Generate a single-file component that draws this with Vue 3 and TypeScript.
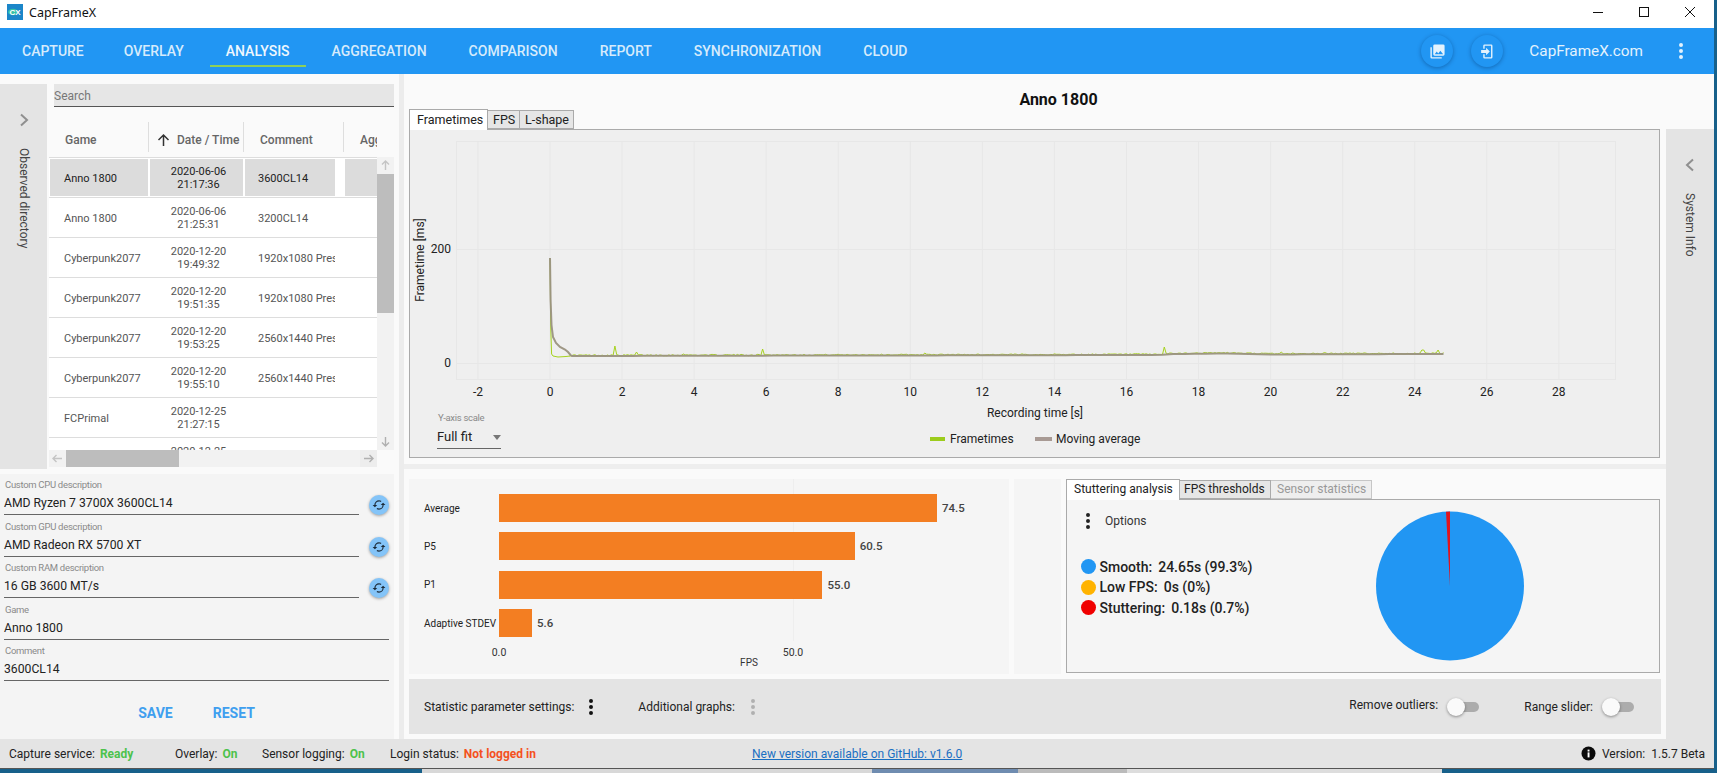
<script setup lang="ts">
const navItems = ['CAPTURE', 'OVERLAY', 'ANALYSIS', 'AGGREGATION', 'COMPARISON', 'REPORT', 'SYNCHRONIZATION', 'CLOUD']
const DOTS = 'M12,16A2,2 0 0,1 14,18A2,2 0 0,1 12,20A2,2 0 0,1 10,18A2,2 0 0,1 12,16M12,10A2,2 0 0,1 14,12A2,2 0 0,1 12,14A2,2 0 0,1 10,12A2,2 0 0,1 12,10M12,4A2,2 0 0,1 14,6A2,2 0 0,1 12,8A2,2 0 0,1 10,6A2,2 0 0,1 12,4Z'
const SYNC = 'M12,18A6,6 0 0,1 6,12C6,11 6.25,10.03 6.7,9.2L5.24,7.74C4.46,8.97 4,10.43 4,12A8,8 0 0,0 12,20V23L16,19L12,15M12,4V1L8,5L12,9V6A6,6 0 0,1 18,12C18,13 17.75,13.97 17.3,14.8L18.76,16.26C19.54,15.03 20,13.57 20,12A8,8 0 0,0 12,4Z'

const rows = [
  { game: 'Anno 1800', d: '2020-06-06', t: '21:17:36', c: '3600CL14', sel: true },
  { game: 'Anno 1800', d: '2020-06-06', t: '21:25:31', c: '3200CL14' },
  { game: 'Cyberpunk2077', d: '2020-12-20', t: '19:49:32', c: '1920x1080 Preset' },
  { game: 'Cyberpunk2077', d: '2020-12-20', t: '19:51:35', c: '1920x1080 Preset' },
  { game: 'Cyberpunk2077', d: '2020-12-20', t: '19:53:25', c: '2560x1440 Preset' },
  { game: 'Cyberpunk2077', d: '2020-12-20', t: '19:55:10', c: '2560x1440 Preset' },
  { game: 'FCPrimal', d: '2020-12-25', t: '21:27:15', c: '' },
  { game: 'FCPrimal', d: '2020-12-25', t: '21:30:02', c: '' }
]

const fields = [
  { label: 'Custom CPU description', value: 'AMD Ryzen 7 3700X 3600CL14', sync: true },
  { label: 'Custom GPU description', value: 'AMD Radeon RX 5700 XT', sync: true },
  { label: 'Custom RAM description', value: '16 GB 3600 MT/s', sync: true },
  { label: 'Game', value: 'Anno 1800', sync: false },
  { label: 'Comment', value: '3600CL14', sync: false }
]

const X0 = 550
const PXS = 36.03
const xt = (t: number) => X0 + PXS * t
const ticks = Array.from({ length: 16 }, (_, i) => -2 + i * 2)

let seed = 17
const rnd = () => {
  seed = (seed * 16807) % 2147483647
  return seed / 2147483647
}
const base = (t: number) => {
  if (t < 16.9) return 356 - (t / 16.9) * 1
  if (t < 17.3) return 355 - (t - 16.9) * 2.5
  if (t < 18.8) return 354 - (t - 17.3) * 0.3
  if (t < 20) return 353.6 + (t - 18.8) * 0.7
  return 354.4 - (t - 20) * 0.08
}
const spikes: Record<string, number> = {
  '1.8': 346, '2.4': 352, '3.7': 354, '5.9': 349, '10.4': 353, '17.05': 347,
  '20.3': 352, '21.5': 352.5, '22.2': 353, '24.2': 350, '24.25': 350, '24.65': 350
}
const green: string[] = ['550,258', '550.8,330', '551.6,354', '553,356', '558,357', '566,356.5', '570,356']
const avg: string[] = []
for (let i = 11; i <= 496; i++) {
  const t = i * 0.05
  const k = t.toFixed(2).replace(/0$/, '')
  const y = spikes[k] ?? base(t) - rnd() * 1.3
  green.push(`${xt(t).toFixed(1)},${y.toFixed(1)}`)
}
avg.push('550,258', '550.6,300', '551.5,325', '553,337', '556,343', '560,347', '565,349.5', '568,352', '570.5,355', '572,356')
for (let i = 1; i <= 81; i++) {
  const t = 0.5 + i * 0.3
  avg.push(`${xt(Math.min(t, 24.8)).toFixed(1)},${base(t).toFixed(1)}`)
}
const greenLine = green.join(' ')
const avgLine = avg.join(' ')

const PXU = 5.88
const bars = [
  { name: 'Average', v: 74.5 },
  { name: 'P5', v: 60.5 },
  { name: 'P1', v: 55.0 },
  { name: 'Adaptive STDEV', v: 5.6 }
]
const legend = [
  { c: '#2196f3', k: 'Smooth:', v: '24.65s (99.3%)' },
  { c: '#ffb300', k: 'Low FPS:', v: '0s (0%)' },
  { c: '#f00000', k: 'Stuttering:', v: '0.18s (0.7%)' }
]
</script>

<template>
  <div class="screen">
    <div class="window">
      <header class="titlebar">
        <svg class="logo" width="16" height="16" viewBox="0 0 16 16">
          <rect width="16" height="16" fill="#1b86c9" />
          <ellipse cx="6" cy="8" rx="5" ry="3.2" fill="#35c2a8" />
          <text x="8" y="11" text-anchor="middle" class="logo-t">CX</text>
        </svg>
        <span class="apptitle">CapFrameX</span>
        <div class="winctl">
          <svg width="12" height="12" viewBox="0 0 12 12"><path d="M1 6.5H11" stroke="#111" fill="none" /></svg>
          <svg width="12" height="12" viewBox="0 0 12 12"><rect x="1.5" y="1.5" width="9" height="9" stroke="#111" fill="none" /></svg>
          <svg width="12" height="12" viewBox="0 0 12 12"><path d="M1 1L11 11M11 1L1 11" stroke="#111" fill="none" /></svg>
        </div>
      </header>

      <nav class="nav">
        <a v-for="n in navItems" :key="n" class="navitem" :class="{ active: n === 'ANALYSIS' }">{{ n }}</a>
        <div class="navright">
          <span class="fab">
            <svg width="17" height="17" viewBox="0 0 24 24"><path fill="#e3f2fd" d="M22,16V4A2,2 0 0,0 20,2H8A2,2 0 0,0 6,4V16A2,2 0 0,0 8,18H20A2,2 0 0,0 22,16M11,12L13.03,14.71L16,11L20,16H8M2,6V20A2,2 0 0,0 4,22H18V20H4V6" /></svg>
          </span>
          <span class="fab">
            <svg width="17" height="17" viewBox="0 0 24 24"><path fill="#e3f2fd" d="M10,17.25V14H3V10H10V6.75L15.25,12L10,17.25M8,2H17A2,2 0 0,1 19,4V20A2,2 0 0,1 17,22H8A2,2 0 0,1 6,20V16H8V20H17V4H8V8H6V4A2,2 0 0,1 8,2Z" /></svg>
          </span>
          <span class="site">CapFrameX.com</span>
          <svg width="24" height="24" viewBox="0 0 24 24"><path fill="#e3f2fd" :d="DOTS" /></svg>
        </div>
      </nav>

      <main class="main">
        <section class="leftcol">
          <div class="lefttop">
            <aside class="rail">
              <svg width="10" height="14" viewBox="0 0 10 14"><path d="M2 1.5L8 7L2 12.5" stroke="#8f8f8f" stroke-width="2" fill="none" /></svg>
              <span class="vtext">Observed directory</span>
            </aside>
            <div class="listpane">
              <div class="search">Search</div>
              <div class="thead">
                <div class="th th1">Game</div>
                <div class="th th2">
                  <svg width="13" height="14" viewBox="0 0 13 14"><path d="M6.5 13V2M1.5 7L6.5 2L11.5 7" stroke="#333" stroke-width="1.5" fill="none" /></svg>
                  <span>Date / Time</span>
                </div>
                <div class="th th3">Comment</div>
                <div class="th th4"><span>Aggregated</span></div>
              </div>
              <div class="tbody">
                <div class="rows">
                  <div v-for="(r, i) in rows" :key="i" class="row" :class="{ sel: r.sel }">
                    <div class="cell game">{{ r.game }}</div>
                    <div class="cell date">{{ r.d }}<br />{{ r.t }}</div>
                    <div class="cell comment">{{ r.c }}</div>
                    <div class="cell"></div>
                  </div>
                </div>
                <div class="vscroll">
                  <svg class="sarrow" width="17" height="17" viewBox="0 0 17 17"><path d="M8.5 13V4M5 7.5L8.5 4L12 7.5" stroke="#c4c4c4" stroke-width="1.4" fill="none" /></svg>
                  <div class="vthumb"></div>
                  <svg class="sarrow down" width="17" height="17" viewBox="0 0 17 17"><path d="M8.5 4V13M5 9.5L8.5 13L12 9.5" stroke="#b0b0b0" stroke-width="1.4" fill="none" /></svg>
                </div>
              </div>
              <div class="hscroll">
                <svg width="17" height="17" viewBox="0 0 17 17"><path d="M13 8.5H4M7.5 5L4 8.5L7.5 12" stroke="#c4c4c4" stroke-width="1.4" fill="none" /></svg>
                <div class="hthumb"></div>
                <svg class="hnext" width="17" height="17" viewBox="0 0 17 17"><path d="M4 8.5H13M9.5 5L13 8.5L9.5 12" stroke="#b0b0b0" stroke-width="1.4" fill="none" /></svg>
              </div>
            </div>
          </div>

          <div class="form">
            <div v-for="f in fields" :key="f.label" class="fieldrow">
              <div class="field">
                <div class="flabel">{{ f.label }}</div>
                <div class="fvalue">{{ f.value }}</div>
              </div>
              <span v-if="f.sync" class="syncbtn">
                <svg width="14" height="14" viewBox="0 0 24 24"><path transform="rotate(90 12 12)" fill="#1b2a38" :d="SYNC" /></svg>
              </span>
            </div>
            <div class="actions"><span>SAVE</span><span>RESET</span></div>
          </div>
        </section>

        <div class="splitter"></div>

        <section class="rightcol">
          <div class="analysis">
            <div class="chartpanel">
              <h1 class="charttitle">Anno 1800</h1>
              <div class="tabs big">
                <span class="tab on">Frametimes</span>
                <span class="tab">FPS</span>
                <span class="tab">L-shape</span>
              </div>
              <div class="chartbox">
                <svg class="plot" width="1251" height="329" viewBox="409 129 1251 329">
                  <rect x="456.5" y="141.5" width="1159" height="238" fill="none" stroke="#e7e7e7" />
                  <line v-for="t in ticks" :key="t" :x1="xt(t)" :x2="xt(t)" y1="141" y2="379" stroke="#e7e7e7" />
                  <line x1="456" x2="1615" y1="249.5" y2="249.5" stroke="#e7e7e7" />
                  <line x1="456" x2="1615" y1="363.5" y2="363.5" stroke="#e7e7e7" />
                  <text v-for="t in ticks" :key="'l' + t" :x="xt(t)" y="396" text-anchor="middle" class="axis">{{ t }}</text>
                  <text x="451" y="253" text-anchor="end" class="axis">200</text>
                  <text x="451" y="367" text-anchor="end" class="axis">0</text>
                  <text transform="translate(424 260) rotate(-90)" text-anchor="middle" class="axis">Frametime [ms]</text>
                  <text x="1035" y="417" text-anchor="middle" class="axis">Recording time [s]</text>
                  <polyline :points="greenLine" fill="none" stroke="#a6d21e" stroke-width="1" />
                  <polyline :points="avgLine" fill="none" stroke="#9a9280" stroke-opacity=".95" stroke-width="2" />
                  <rect x="930" y="437" width="15" height="4" fill="#9ccc1c" />
                  <text x="950" y="443" class="axis">Frametimes</text>
                  <rect x="1035" y="437" width="17" height="4" fill="#a89a94" />
                  <text x="1056" y="443" class="axis">Moving average</text>
                </svg>
                <div class="scale">
                  <div class="flabel">Y-axis scale</div>
                  <div class="scaleval">Full fit<i class="caret"></i></div>
                </div>
              </div>
            </div>

            <div class="band"></div>

            <div class="lower">
              <div class="barpanel">
                <i class="gridline"></i>
                <div v-for="b in bars" :key="b.name" class="barrow">
                  <span class="barname">{{ b.name }}</span>
                  <span class="bar" :style="{ width: b.v * PXU + 'px' }"></span>
                  <span class="barval">{{ b.v.toFixed(1) }}</span>
                </div>
                <span class="tick tick0">0.0</span>
                <span class="tick tick50">50.0</span>
                <span class="tick tickfps">FPS</span>
              </div>
              <div class="spacer"></div>
              <div class="stats">
                <div class="tabs small">
                  <span class="tab on">Stuttering analysis</span>
                  <span class="tab">FPS thresholds</span>
                  <span class="tab off">Sensor statistics</span>
                </div>
                <div class="statbox">
                  <div class="statleft">
                    <div class="options">
                      <svg width="24" height="24" viewBox="0 0 24 24"><path fill="#222" :d="DOTS" /></svg>
                      <span>Options</span>
                    </div>
                    <div class="leg">
                      <div v-for="l in legend" :key="l.k" class="legrow">
                        <i :style="{ background: l.c }"></i>
                        <b>{{ l.k }}</b><b class="legv">{{ l.v }}</b>
                      </div>
                    </div>
                  </div>
                  <svg class="pie" width="150" height="150" viewBox="0 0 150 150">
                    <ellipse cx="75" cy="75" rx="74" ry="74.5" fill="#2196f3" />
                    <path d="M75 75L71 .7A74 74.5 0 0 1 75 .5Z" fill="#e0141e" />
                  </svg>
                </div>
              </div>
            </div>

            <div class="settings">
              <span>Statistic parameter settings:</span>
              <svg class="d1" width="24" height="24" viewBox="0 0 24 24"><path fill="#111" :d="DOTS" /></svg>
              <span class="addg">Additional graphs:</span>
              <svg class="d2" width="24" height="24" viewBox="0 0 24 24"><path fill="#b0b0b0" :d="DOTS" /></svg>
              <span class="ro">Remove outliers:</span>
              <span class="toggle"><i></i></span>
              <span class="rs">Range slider:</span>
              <span class="toggle"><i></i></span>
            </div>
            <div class="settings-foot"></div>
          </div>

          <aside class="rail sys">
            <svg width="10" height="14" viewBox="0 0 10 14"><path d="M8 1.5L2 7L8 12.5" stroke="#8f8f8f" stroke-width="2" fill="none" /></svg>
            <span class="vtext">System Info</span>
          </aside>
        </section>
      </main>

      <footer class="status">
        <span>Capture service:<b class="ok">Ready</b></span>
        <span>Overlay:<b class="ok">On</b></span>
        <span>Sensor logging:<b class="ok">On</b></span>
        <span>Login status:<b class="bad">Not logged in</b></span>
        <a class="link">New version available on GitHub: v1.6.0</a>
        <span class="version">
          <svg width="15" height="15" viewBox="0 0 15 15">
            <circle cx="7.5" cy="7.5" r="7" fill="#0a0a0a" />
            <rect x="6.6" y="6.4" width="1.9" height="5" fill="#fff" />
            <rect x="6.6" y="3.6" width="1.9" height="1.9" fill="#fff" />
          </svg>
          Version:&nbsp; 1.5.7 Beta
        </span>
      </footer>
    </div>
    <div class="taskbar">
      <i class="s1"></i><i class="s2"></i><i class="s3"></i><i class="s4"></i><i class="s5"></i><i class="s6"></i>
    </div>
  </div>
</template>

<style scoped>
.screen { width: 1717px; height: 773px; background: #17608a; overflow: hidden; font-family: Roboto, "Liberation Sans", sans-serif; color: #222; }
.window { width: 1714px; height: 769px; display: flex; flex-direction: column; background: #fafafa; }

.titlebar { height: 28px; flex: none; background: #fff; display: flex; align-items: flex-start; }
.logo { margin: 4px 0 0 7px; }
.logo-t { font: 700 8px "Liberation Sans", sans-serif; fill: #fff; }
.apptitle { margin: 5px 0 0 6px; font: 12.5px/16px "Noto Sans", sans-serif; color: #111; }
.winctl { margin-left: auto; margin-top: 6px; padding-right: 18px; display: flex; gap: 34px; }

.nav { height: 46px; flex: none; background: #2196f3; display: flex; align-items: center; padding-left: 1px; }
.navitem { position: relative; padding: 0 21px; font-size: 14px; font-weight: 500; color: #d6ebfc; line-height: 46px; }
.navitem:first-child { padding-right: 19px; }
.navitem.active { color: #eef7fe; }
.navitem.active::after { content: ""; position: absolute; left: 5px; right: 5px; bottom: 7px; height: 2px; background: #8ed05a; }
.navright { margin-left: auto; display: flex; align-items: center; padding-right: 21px; }
.fab { width: 32px; height: 32px; border-radius: 50%; background: #2196f3; box-shadow: 0 1px 4px rgba(0, 40, 90, .4); display: flex; align-items: center; justify-content: center; margin-right: 18px; }
.site { margin: 0 26px 0 8px; font-size: 15.3px; color: #e3f2fd; }

.main { height: 665px; flex: none; display: flex; }
.leftcol { width: 394px; flex: none; display: flex; flex-direction: column; }
.lefttop { height: 385px; margin-top: 10px; flex: none; display: flex; }
.rail { width: 47px; flex: none; background: #e4e4e4; display: flex; flex-direction: column; align-items: center; padding-top: 29px; box-sizing: border-box; }
.vtext { margin-top: 21px; writing-mode: vertical-rl; font-size: 12px; line-height: 16px; color: #444; }
.listpane { margin-left: 2px; width: 345px; display: flex; flex-direction: column; }
.search { margin-left: 5px; height: 22px; line-height: 25px; background: #e6e6e6; border-bottom: 1px solid #555; font-size: 12px; color: #777; }
.thead { margin-top: 10px; height: 40px; flex: none; display: flex; color: #666; font-size: 12px; font-weight: 500; align-items: center; }
.th { height: 30px; display: flex; align-items: center; box-sizing: border-box; border-right: 1px solid #dedede; overflow: hidden; white-space: nowrap; padding-top: 6px; }
.th1 { width: 100px; padding-left: 16px; }
.th2 { width: 95px; padding-left: 8px; gap: 7px; }
.th3 { width: 100px; padding-left: 16px; }
.th4 { width: 33px; padding-left: 16px; border-right: 0; }
.tbody { height: 293px; flex: none; display: flex; }
.rows { width: 328px; height: 293px; overflow: hidden; background: #fff; border-top: 1px solid #ddd; box-sizing: border-box; }
.row { height: 40px; box-sizing: border-box; padding: 1px 0 1px 1px; border-bottom: 1px solid #ddd; display: grid; grid-template-columns: 98px 93px 98px 32px; column-gap: 2px; font-size: 11px; color: #555; }
.row.sel { color: #222; }
.row.sel .cell { background: #dcdcdc; }
.cell { display: flex; align-items: center; white-space: nowrap; overflow: hidden; line-height: 13px; }
.game { padding: 1px 0 0 14px; }
.date { text-align: center; padding-left: 4px; display: block; padding-top: 5.5px; box-sizing: border-box; }
.comment { padding: 1px 0 0 13px; margin-right: 8px; }
.vscroll { width: 17px; background: #f2f2f2; display: flex; flex-direction: column; }
.vthumb { height: 139px; background: #bdbdbd; }
.sarrow { flex: none; }
.down { margin-top: auto; }
.hscroll { height: 17px; width: 328px; flex: none; background: #f2f2f2; display: flex; }
.hthumb { width: 113px; background: #bdbdbd; }
.hnext { margin-left: auto; background: #ededed; }

.form { margin-top: 5px; flex: 1; background: #f4f4f4; display: flex; flex-direction: column; padding: 5px 5px 0 4px; gap: 5.5px; }
.fieldrow { display: flex; align-items: flex-end; height: 36px; flex: none; }
.field { flex: 1; border-bottom: 1px solid #666; height: 36px; box-sizing: border-box; }
.flabel { font-size: 9.5px; letter-spacing: -.3px; line-height: 12px; color: #8a8a8a; padding-left: 1px; white-space: nowrap; }
.fvalue { font-size: 12.2px; line-height: 25px; height: 23px; color: #222; }
.syncbtn { width: 20px; height: 20px; margin-left: 10px; border-radius: 50%; background: #84c4f8; box-shadow: 0 1px 3px rgba(0, 0, 0, .35); display: flex; align-items: center; justify-content: center; flex: none; }
.actions { margin-top: 16px; display: flex; justify-content: center; gap: 40px; font-size: 14px; font-weight: 700; color: #3f9fef; line-height: 20px; }

.splitter { width: 10px; flex: none; box-sizing: border-box; border-left: 5px solid #fafafa; background: #ececec; }

.rightcol { flex: 1; display: flex; min-width: 0; }
.analysis { width: 1262px; flex: none; display: flex; flex-direction: column; }
.rail.sys { width: 48px; margin-top: 55px; }

.chartpanel { height: 390px; flex: none; box-sizing: border-box; padding: 15px 6px 0 5px; }
.charttitle { margin: 0; height: 20px; text-align: center; font-size: 16px; font-weight: 700; line-height: 22px; color: #111; transform: translateX(24px); }
.tabs { display: flex; position: relative; z-index: 1; align-items: flex-end; }
.tabs.big { height: 21px; font-size: 12.5px; margin-bottom: -1px; }
.tabs.small { height: 21px; font-size: 12px; margin-bottom: -1px; }
.tab { box-sizing: border-box; height: 19px; line-height: 17px; border: 1px solid #aaa; border-left-width: 0; background: #e6e6e6; color: #222; margin-bottom: 1px; white-space: nowrap; }
.tab.on { height: 21px; line-height: 19px; background: #fff; border-left-width: 1px; border-bottom: 0; margin-bottom: 0; }
.big .tab.on { width: 79px; padding-left: 7px; }
.big .tab:nth-child(2) { width: 32px; padding-left: 5px; }
.big .tab:nth-child(3) { width: 54px; padding-left: 5px; }
.small .tab.on { width: 114px; padding-left: 7px; }
.small .tab:nth-child(2) { width: 91px; padding-left: 4px; }
.small .tab.off { width: 101px; padding-left: 6px; color: #999; border-color: #c6c6c6; background: #eee; }
.chartbox { position: relative; width: 1251px; height: 329px; box-sizing: border-box; border: 1px solid #aaa; background: #efefef; }
.plot { position: absolute; left: -1px; top: -1px; display: block; }
.axis { font: 12px Roboto, sans-serif; fill: #222; }
.scale { position: absolute; left: 27px; top: 282px; width: 64px; }
.scaleval { position: relative; margin-top: 1px; height: 23px; line-height: 23px; font-size: 13px; color: #222; border-bottom: 1px solid #666; }
.caret { position: absolute; right: 0; top: 10px; border: 4px solid transparent; border-top: 5px solid #777; border-left-width: 4.5px; border-right-width: 4.5px; }

.band { height: 5px; flex: none; background: #eee; }
.lower { height: 210px; flex: none; box-sizing: border-box; padding: 10px 0 0 5px; display: flex; align-items: flex-start; }
.barpanel { position: relative; width: 600px; height: 195px; flex: none; box-sizing: border-box; background: #f5f5f5; padding-top: 15px; display: flex; flex-direction: column; gap: 10.4px; }
.gridline { position: absolute; left: 384px; top: 0; height: 162px; width: 1px; background: #eee; }
.barrow { position: relative; height: 28px; display: flex; align-items: center; flex: none; }
.barname { width: 90px; padding-left: 15px; box-sizing: border-box; font-size: 10px; color: #222; white-space: nowrap; flex: none; }
.bar { height: 28px; background: #f37e22; flex: none; }
.barval { margin-left: 5px; font-size: 11.5px; font-weight: 500; color: #444; }
.tick { position: absolute; font-size: 10.5px; line-height: 12px; color: #333; transform: translateX(-50%); }
.tick0 { left: 90px; top: 168px; }
.tick50 { left: 384px; top: 168px; }
.tickfps { left: 340px; top: 178px; font-size: 10px; }
.spacer { width: 47px; height: 195px; margin-left: 5px; flex: none; background: #f5f5f5; }
.stats { margin-left: 5px; width: 594px; flex: none; }
.statbox { position: relative; height: 174px; box-sizing: border-box; border: 1px solid #aaa; background: #f5f5f5; display: flex; }
.statleft { width: 250px; flex: none; padding-left: 9px; }
.options { display: flex; align-items: center; gap: 5px; margin-top: 9px; font-size: 12px; color: #333; }
.leg { margin: 24px 0 0 5px; display: flex; flex-direction: column; gap: 1px; }
.legrow { display: flex; align-items: center; height: 19.5px; font-size: 14px; }
.legrow b { font-weight: 500; color: #222; }
.legrow i { width: 15px; height: 15px; border-radius: 50%; margin-right: 3.5px; flex: none; }
.legv { margin-left: 6px; }
.pie { position: absolute; left: 308px; top: 11px; }

.settings { margin-left: 5px; width: 1252px; height: 55px; flex: none; box-sizing: border-box; background: #e4e4e4; display: flex; align-items: center; padding: 0 27px 0 15px; font-size: 12px; color: #222; }
.d1 { margin-left: 5px; }
.addg { margin-left: 35px; }
.d2 { margin-left: 6px; }
.ro { margin-left: auto; margin-top: -4px; margin-right: 9px; }
.rs { margin-left: 45px; margin-right: 9px; }
.toggle { position: relative; width: 32px; height: 18px; flex: none; }
.toggle::before { content: ""; position: absolute; left: 9px; right: 0; top: 4px; height: 10px; border-radius: 5px; background: #acacac; }
.toggle i { position: absolute; left: 0; top: 0; width: 18px; height: 18px; border-radius: 50%; background: #fafafa; box-shadow: 0 1px 3px rgba(0, 0, 0, .4); }
.settings-foot { height: 5px; flex: none; }

.status { height: 30px; flex: none; box-sizing: border-box; border-bottom: 1px solid #555; background: #e4e4e4; display: grid; grid-template-columns: 166px 87px 128px 362px 1fr auto; padding: 0 9px 0 9px; align-items: center; font-size: 12px; color: #222; white-space: nowrap; }
.status b { margin-left: 5px; font-weight: 700; }
.ok { color: #4cc24c; }
.bad { color: #f4511e; }
.link { color: #1a6fc2; text-decoration: underline; }
.version { display: flex; align-items: center; gap: 6px; }

.taskbar { height: 4px; display: flex; }
.taskbar i { display: block; height: 4px; flex: none; }
.s1 { width: 422px; background: #17608a; }
.s2 { width: 450px; background: #d8d8d8; }
.s3 { width: 146px; background: #6f8cb0; }
.s4 { width: 109px; background: #bbb; }
.s5 { width: 315px; background: #ddd; }
.s6 { width: 275px; background: #17608a; }
</style>

<style>
html, body { margin: 0; padding: 0; overflow: hidden; background: #17608a; }
</style>
